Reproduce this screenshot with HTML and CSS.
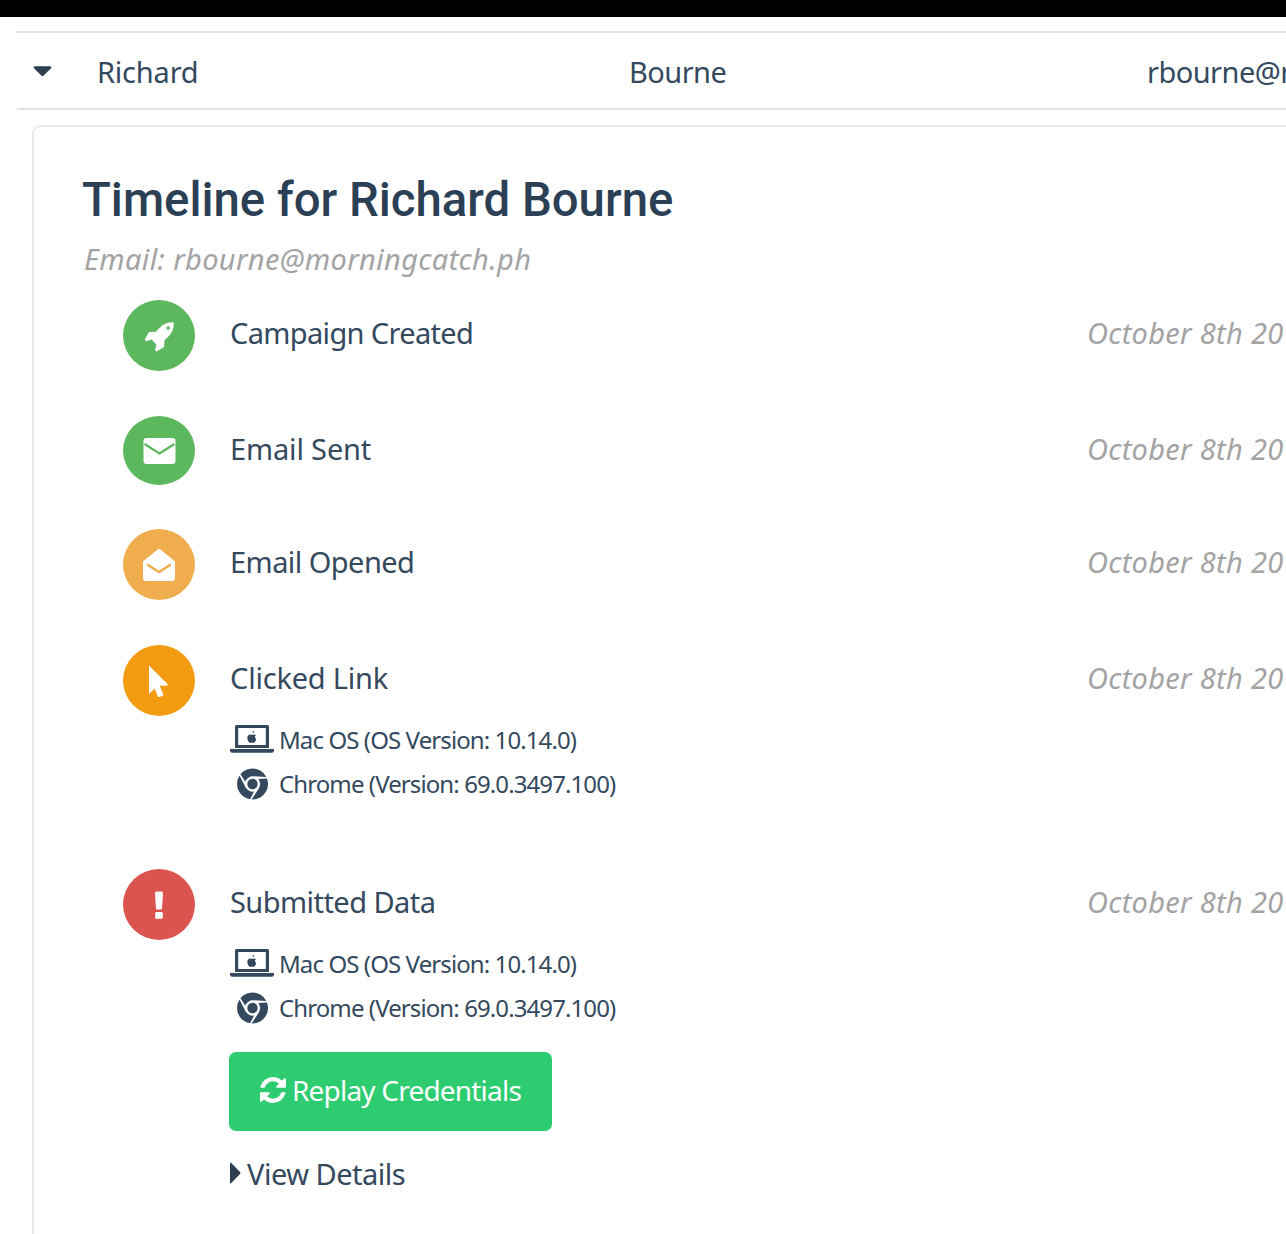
FILE: index.html
```html
<!DOCTYPE html>
<html lang="en">
<head>
<meta charset="utf-8">
<title>Timeline</title>
<link rel="stylesheet" href="styles.css">
</head>
<body>
<svg class="defs" width="0" height="0" aria-hidden="true">
  <symbol id="laptop" viewBox="0 0 44 30">
    <path fill-rule="evenodd" d="M6.500 1h31A1.500 1.500 0 0 1 39 2.500V24H5V2.500A1.500 1.500 0 0 1 6.500 1zM8.200 4v17h27.600V4z" fill="currentColor"/>
    <path d="M0 25h44v1.500a2.300 2.300 0 0 1-2.300 2.300H2.300A2.300 2.300 0 0 1 0 26.500z" fill="currentColor"/>
    <path d="M22.600 9c.9-.1 1.700-.9 1.800-2.200-1.100.1-2 1-1.800 2.200zM25.800 14.600c-1-.6-1.200-2.300.1-3.100-.6-.9-1.600-1.100-2.300-1.100-.8 0-1.300.4-1.700.4s-1-.4-1.700-.4c-1.500 0-2.900 1.300-2.900 3.400 0 2.300 1.700 5.200 3.200 5.200.5 0 .9-.4 1.500-.4s.9.400 1.500.400c1.100 0 2.200-2 2.600-3.500z" fill="currentColor"/>
  </symbol>
  <symbol id="chrome" viewBox="0 0 1792 1792">
    <path d="M893 0q240-2 451 120 232 134 352 372l-742-39q-160-9-294 74.500t-185 229.500l-276-424q128-159 311-245.500t383-87.500zm-747 405l337 663q72 143 211 217t293 45l-230 451q-212-33-385-157.500t-272.500-316-99.500-411.500q0-267 146-491zm1586 169q58 150 59.500 310.500t-48.500 306-153 272-246 209.500q-230 133-498 119l405-623q88-131 82.500-290.500t-106.500-277.500zm-836 20q125 0 213.500 88.500t88.500 213.500-88.500 213.500-213.500 88.500-213.500-88.500-88.500-213.500 88.500-213.500 213.500-88.500z" fill="currentColor"/>
  </symbol>
</svg>
<div class="topbar"></div>
<main class="content">
  <div class="row-head">
    <svg class="caret-down" viewBox="0 0 20 12"><path d="M2 1h16c1.200 0 1.800 1.300 1 2.200l-8 7.800c-.6.600-1.400.600-2 0L1 3.200C.2 2.300.8 1 2 1z" fill="currentColor"/></svg>
    <span class="cell-first">Richard</span>
    <span class="cell-last">Bourne</span>
    <span class="cell-email">rbourne@morningcatch.ph</span>
  </div>
  <section class="panel">
    <h2 class="title">Timeline for Richard Bourne</h2>
    <p class="subtitle">Email: rbourne@morningcatch.ph</p>
    <div class="event ev-created">
      <div class="badge green">
        <svg class="ico-rocket" viewBox="0 0 1792 1792"><path d="M1504 448q0-40-28-68t-68-28-68 28-28 68 28 68 68 28 68-28 28-68zm224-288q0 249-75.500 430.500t-253.500 360.500q-81 80-195 176l-20 379q-2 16-16 26l-384 224q-7 4-16 4-12 0-23-9l-64-64q-13-14-8-32l85-276-281-281-276 85q-3 1-9 1-14 0-23-9l-64-64q-17-19-5-39l224-384q10-14 26-16l379-20q96-114 176-195 188-187 358-258t431-71q14 0 24 9.500t10 22.500z" fill="#fff"/></svg>
      </div>
      <div class="event-body"><div class="event-line"><span>Campaign Created</span><time>October 8th 2018 9:15:43 am</time></div></div>
    </div>
    <div class="event ev-sent">
      <div class="badge green">
        <svg class="ico-env" viewBox="0 0 32 26"><rect width="32" height="26" rx="3" fill="#fff"/><path d="M1 6l15 9.500L31 6" fill="none" stroke="#5cb85c" stroke-width="2.200"/></svg>
      </div>
      <div class="event-body"><div class="event-line"><span>Email Sent</span><time>October 8th 2018 9:15:43 am</time></div></div>
    </div>
    <div class="event ev-opened">
      <div class="badge amber">
        <svg class="ico-open" viewBox="0 0 32 32"><path d="M14 1a3 3 0 0 1 4 0l13 10.500a2 2 0 0 1 1 2V29a3 3 0 0 1-3 3H3a3 3 0 0 1-3-3V13.500a2 2 0 0 1 1-2z" fill="#fff"/><path d="M5 16l11 7 11-7" fill="none" stroke="#f0ad4e" stroke-width="2.400" stroke-linecap="round"/></svg>
      </div>
      <div class="event-body"><div class="event-line"><span>Email Opened</span><time>October 8th 2018 9:15:44 am</time></div></div>
    </div>
    <div class="event ev-clicked">
      <div class="badge orange">
        <svg class="ico-pointer" viewBox="0 0 1000 1792"><path d="M962 1056q31 30 14 69-17 40-59 40h-382l201 476q10 25 0 49t-34 35l-177 75q-25 10-49 0t-35-34l-191-452-312 312q-19 19-45 19-12 0-24-5-40-17-40-59V77q0-42 40-59 12-5 24-5 27 0 45 19z" fill="#fff"/></svg>
      </div>
      <div class="event-body">
        <div class="event-line"><span>Clicked Link</span><time>October 8th 2018 9:15:52 am</time></div>
        <div class="detail first"><svg class="d-laptop"><use href="#laptop"/></svg><span>Mac OS (OS Version: 10.14.0)</span></div>
        <div class="detail"><svg class="d-chrome"><use href="#chrome"/></svg><span>Chrome (Version: 69.0.3497.100)</span></div>
      </div>
    </div>
    <div class="event ev-submitted">
      <div class="badge red">
        <svg class="ico-bang" viewBox="0 0 10 28"><path d="M1 2a1.500 1.500 0 0 1 1.500-1.500h5A1.500 1.500 0 0 1 9 2L8 17.500a1 1 0 0 1-1 1H3a1 1 0 0 1-1-1z" fill="#fff"/><rect x="1.200" y="21" width="7.600" height="6.800" rx="1.300" fill="#fff"/></svg>
      </div>
      <div class="event-body">
        <div class="event-line"><span>Submitted Data</span><time>October 8th 2018 9:16:03 am</time></div>
        <div class="detail first"><svg class="d-laptop"><use href="#laptop"/></svg><span>Mac OS (OS Version: 10.14.0)</span></div>
        <div class="detail"><svg class="d-chrome"><use href="#chrome"/></svg><span>Chrome (Version: 69.0.3497.100)</span></div>
        <button class="replay" type="button">
          <svg class="ico-refresh" viewBox="128 128 1536 1536"><path d="M1639 1056q0 5-1 7-64 268-268 434.500t-478 166.500q-146 0-282.500-55t-243.500-157l-129 129q-19 19-45 19t-45-19-19-45v-448q0-26 19-45t45-19h448q26 0 45 19t19 45-19 45l-137 137q71 66 161 102t187 36q134 0 250-65t186-179q11-17 53-117 8-23 30-23h192q13 0 22.500 9.500t9.500 22.500zm25-800v448q0 26-19 45t-45 19h-448q-26 0-45-19t-19-45 19-45l138-138q-148-137-349-137-134 0-250 65t-186 179q-11 17-53 117-8 23-30 23h-199q-13 0-22.500-9.500t-9.500-22.500v-7q65-268 270-434.500t480-166.500q146 0 284 55.500t245 156.500l130-129q19-19 45-19t45 19 19 45z" fill="#fff"/></svg>
          <span>Replay Credentials</span>
        </button>
        <div class="details-toggle">
          <svg class="caret-right" viewBox="0 0 11 22"><path d="M1 0.800L10 10c.6.600.6 1.400 0 2l-9 9.200c-.4.400-1 .1-1-.5V1.300c0-.6.600-.9 1-.5z" fill="currentColor"/></svg>
          <span>View Details</span>
        </div>
      </div>
    </div>
  </section>
</main>
</body>
</html>
```
FILE: styles.css
```css
html, body { margin: 0; padding: 0; background: #fff; }
body {
  width: 1286px;
  height: 1234px;
  overflow: hidden;
  font-family: "Noto Sans", "Liberation Sans", sans-serif;
  color: #34495e;
}
.defs { position: absolute; }
.topbar { height: 17px; background: #000; }
.content { padding: 14px 0 0 17px; width: 1500px; }
.row-head {
  display: flex;
  align-items: center;
  height: 73px;
  padding-top: 2px;
  border-top: 2px solid #e3e3e3;
  border-bottom: 2px solid #e3e3e3;
  font-size: 29px;
  letter-spacing: -0.55px;
}
.caret-down { width: 19px; height: 12px; margin: -2px 0 0 16px; color: #2c3e50; }
.cell-first { margin-left: 45px; width: 532px; letter-spacing: -0.2px; }
.cell-last { width: 518px; }
.cell-email { white-space: nowrap; }
.panel {
  margin: 15px 0 0 15px;
  border: 2px solid #e8e8e8;
  border-radius: 9px;
  padding: 45px 0 0 48px;
  height: 1200px;
}
.title {
  margin: 0;
  font-family: Roboto, sans-serif;
  font-weight: 500;
  font-size: 47.300px;
  line-height: 56px;
  color: #2b4055;
}
.subtitle {
  margin: 11px 0 0 2px;
  font-size: 29px;
  line-height: 40px;
  font-style: italic;
  color: #a3a3a3;
  letter-spacing: 0.35px;
}
.event { display: flex; margin-left: 41px; }
.ev-created { margin-top: 21px; height: 116px; }
.ev-sent { height: 113px; }
.ev-opened { height: 116px; }
.ev-clicked { height: 224px; }
.badge {
  flex: none;
  width: 72px;
  height: 71px;
  border-radius: 50%;
  display: flex;
  align-items: center;
  justify-content: center;
}
.ev-sent .badge { height: 69px; }
.green { background: #5cb85c; }
.amber { background: #f0ad4e; }
.orange { background: #f39c12; }
.red { background: #dc5450; }
.ico-rocket { width: 32px; height: 32px; }
.ico-env { width: 33px; height: 26px; }
.ico-open { width: 32px; height: 32px; }
.ico-pointer { width: 20px; height: 32px; }
.ico-bang { width: 10px; height: 28px; }
.event-body { margin-left: 35px; flex: 1; }
.event-line {
  display: flex;
  height: 64px;
  align-items: center;
  font-size: 29px;
  letter-spacing: -0.65px;
}
.event-line span { width: 857px; flex: none; }
.ev-sent .event-line span { letter-spacing: -0.15px; }
.ev-opened .event-line span { letter-spacing: -0.55px; }
.ev-clicked .event-line span { letter-spacing: -0.2px; }
.ev-submitted .event-line span { letter-spacing: -0.55px; }
.event-line time { font-style: italic; color: #a3a3a3; white-space: nowrap; letter-spacing: 0.3px; }
.detail {
  display: flex;
  align-items: center;
  height: 44px;
  font-size: 24px;
  letter-spacing: -0.9px;
}
.detail.first { margin-top: 8px; }
.d-laptop { width: 44px; height: 30px; margin-right: 5px; }
.d-chrome { width: 31px; height: 32px; margin: 2px 11px 0 7px; }
.replay {
  display: flex;
  align-items: center;
  justify-content: center;
  gap: 6px;
  width: 323px;
  height: 79px;
  padding: 0 0 4px;
  margin: 23px 0 0 -1px;
  border: 0;
  border-radius: 7px;
  background: #2ecc71;
  color: #fff;
  font: inherit;
  font-size: 28px;
  letter-spacing: -0.8px;
}
.ico-refresh { width: 26px; height: 26px; }
.details-toggle {
  display: flex;
  align-items: center;
  gap: 6px;
  margin: 20px 0 0 0;
  height: 44px;
  font-size: 29px;
  letter-spacing: -0.5px;
}
.caret-right { width: 11px; height: 22px; color: #2c3e50; }
```
